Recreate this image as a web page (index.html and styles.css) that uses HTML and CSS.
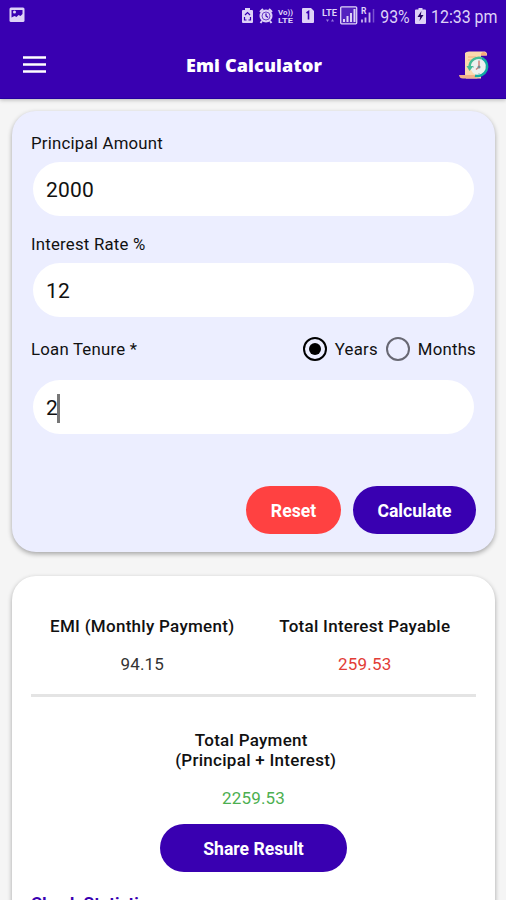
FILE: index.html
```html
<!DOCTYPE html>
<html lang="en">
<head>
<meta charset="utf-8">
<title>Emi Calculator</title>
<link rel="stylesheet" href="styles.css">
</head>
<body>
<header class="top">
  <div class="status">
    <svg class="shot" width="16" height="16" viewBox="0 0 16 16"><rect x=".5" y=".5" width="15" height="14.5" rx="1.5" fill="#ded2f7"/><path d="M2.500 3h11v4l-2 2-2-1-2 2-2-1-3 1.500z" fill="#3900b1"/><circle cx="5.500" cy="5" r="1.500" fill="#ded2f7"/></svg>
    <div class="indicators">
      <svg width="134" height="20" viewBox="241 6 134 20" fill="#ded2f7" stroke-linecap="butt">
        <path d="M245 8h5v2h2q1 0 1 1v11q0 1-1 1h-9q-1 0-1-1V11q0-1 1-1h2z"/>
        <path d="M245 15l2.500-2.500L250 15M244.500 17v3h2M250.500 17v3h-2" fill="none" stroke="#3900b1" stroke-width="1.200"/>
        <circle cx="266" cy="16" r="6.500"/><path d="M260 12l3-3M272 12l-3-3M262 21l-1.500 2M270 21l1.500 2" stroke="#ded2f7" stroke-width="2"/>
        <circle cx="266" cy="16" r="4" fill="none" stroke="#3900b1" stroke-width=".7"/><path d="M266 13.500V16l2 1.500" fill="none" stroke="#3900b1" stroke-width="1.200"/>
        <text class="mini" x="278" y="14.500" textLength="15" lengthAdjust="spacingAndGlyphs">Vo))</text><text class="mini" x="278" y="23" textLength="15" lengthAdjust="spacingAndGlyphs">LTE</text>
        <path d="M303 8h8l3 3v11q0 1-1 1h-10q-1 0-1-1V9q0-1 1-1z"/><path d="M306.500 13l2-1.500V19.500" fill="none" stroke="#3900b1" stroke-width="1.600"/>
        <text class="tiny" x="322" y="16" textLength="15" lengthAdjust="spacingAndGlyphs">LTE</text><path d="M326 19.500l1.500 2.500 1.500-2.500zM331 21.500l1.500-2.500 1.500 2.500z" fill="#9878df"/>
        <rect x="340.700" y="6.800" width="16" height="17" rx="1" fill="#5422bf" stroke="#ded2f7" stroke-width="1.300"/>
        <path d="M344 22v-3M347.500 22v-6M351 22v-9M354.500 22V9" stroke="#ded2f7" stroke-width="2"/>
        <text class="tiny" x="361" y="14">R</text>
        <path d="M362 22.500v-3M365.500 22.500v-5M369.500 22.500v-10" stroke="#c8b6ed" stroke-width="1.800"/><path d="M373.500 22.500V9" stroke="#7950cf" stroke-width="1.500"/>
      </svg>
      <span class="percent">93%</span>
      <svg class="battery" width="11" height="16" viewBox="0 0 11 16"><path d="M3.500 0h4v1.500H10q1 0 1 1V15q0 1-1 1H1q-1 0-1-1V2.500q0-1 1-1h2.500z" fill="#ded2f7"/><path d="M6.500 3L2.500 9h2.700L4.500 13l4-6H5.800z" fill="#21005f"/></svg>
      <span class="clock">12:33 pm</span>
    </div>
  </div>
  <div class="appbar">
    <svg width="24" height="18" viewBox="0 0 24 18"><path d="M0 1.500h23M0 8.500h23M0 15.500h23" stroke="#fff" stroke-width="2.700"/></svg>
    <h1>Emi Calculator</h1>
    <svg width="31" height="28" viewBox="0 0 31 28">
      <path d="M6 2q1-1.500 4-1.500h16q2.500 1 2 4H22v23H7l-1-4z" fill="#fbd9ae"/>
      <path d="M22 4.500q-.5-3.500 3-3.500 3 .5 2.500 3.500z" fill="#f5aa7b"/>
      <path d="M0 24h16q0 3 3 3.500H4Q.5 27.500 0 24z" fill="#f2b38a"/>
      <path d="M9 6h8M9 9h5" stroke="#f3bd8c" stroke-width="1.300"/>
      <circle cx="20" cy="16" r="8.500" fill="#edf1ef"/>
      <path d="M10.500 16a9.500 9.500 0 0 1 13-8.600" fill="none" stroke="#43bd98" stroke-width="2.500"/>
      <path d="M23.500 7.400A9.500 9.500 0 0 1 16 24.700" fill="none" stroke="#12aaa3" stroke-width="2.500"/>
      <path d="M7.500 15h7l-4 5z" fill="#43bd98"/>
      <path d="M20 10v6l-3 2.500" fill="none" stroke="#cf7d73" stroke-width="1.400"/><circle cx="20" cy="16" r="1.500" fill="#758b93"/>
      <path d="M20 9v1M26 16h1M20 22v1M14 16h1" stroke="#9eafae"/>
    </svg>
  </div>
</header>
<main>
  <section class="card form">
    <div class="label">Principal Amount</div>
    <div class="field">2000</div>
    <div class="label second">Interest Rate %</div>
    <div class="field">12</div>
    <div class="tenure">
      <span class="name">Loan Tenure *</span>
      <span class="radio on"></span><span>Years</span>
      <span class="radio"></span><span>Months</span>
    </div>
    <div class="field">2<i class="caret"></i></div>
    <div class="actions"><button class="btn reset">Reset</button><button class="btn calc">Calculate</button></div>
  </section>
  <section class="card result">
    <div class="totals">
      <div><h2>EMI (Monthly Payment)</h2><p>94.15</p></div>
      <div><h2>Total Interest Payable</h2><p class="red">259.53</p></div>
    </div>
    <div class="payment">
      <h2>Total Payment&nbsp;<br>&nbsp;(Principal + Interest)</h2>
      <p class="green">2259.53</p>
      <button class="btn share">Share Result</button>
    </div>
    <h3>Check Statistics</h3>
  </section>
</main>
</body>
</html>
```
FILE: styles.css
```css
* { box-sizing: border-box; }
body { margin: 0; height: 900px; overflow: hidden; background: #f5f5f5; color: #111; font: 16px/20px Roboto, "Liberation Sans", sans-serif; }
svg { display: block; flex: none; }
h1, h2, h3, p { margin: 0; }
.top { height: 99px; background: #3900b1; border-bottom: 1px solid #2500a0; box-shadow: 0 1px 4px #0004; }
.status { display: flex; justify-content: space-between; height: 32px; padding: 0 8px 0 9px; color: #ded2f7; }
.shot { margin-top: 7px; }
.indicators { display: flex; padding-top: 6px; white-space: nowrap; }
.tiny { font: bold 8.5px Roboto, sans-serif; }
.mini { font: bold 7.2px Roboto, sans-serif; }
.percent, .clock { font-size: 18px; line-height: 22px; transform-origin: left; }
.percent { width: 35px; padding-left: 6px; transform: scaleX(.88); }
.battery { margin: 2px 5px 0 5px; }
.clock { width: 67px; transform: scaleX(.885); }
.appbar { display: flex; align-items: center; justify-content: space-between; height: 66px; padding: 0 16px 0 23px; }
h1 { color: #fff; font: 800 18px/24px "Open Sans", sans-serif; letter-spacing: .15px; margin-left: 2px; white-space: nowrap; }
main { padding: 12px 11px 0 12px; }
.card { border-radius: 24px; box-shadow: 0 2px 5px #0005; }
.form { height: 441px; padding: 22px 19px 0 19px; background: #eceeff; }
.label, .tenure { font-size: 16.8px; letter-spacing: .22px; }
.label { height: 20px; }
.field { display: flex; align-items: center; height: 54px; margin: 9px 2px 0; padding: 2px 13px 0; border-radius: 27px; background: #fff; font-size: 21px; letter-spacing: .2px; }
.second { margin-top: 18px; }
.caret { width: 3px; height: 29px; margin-left: -1px; background: #777; }
.tenure { display: flex; align-items: center; height: 26px; margin-top: 19px; white-space: nowrap; }
.tenure + .field { margin-top: 18px; }
.name { margin-right: auto; }
.radio { display: flex; align-items: center; justify-content: center; width: 24px; height: 24px; border: 2px solid #686873; border-radius: 50%; margin: 0 8px; }
.radio.on { border-color: #000; }
.radio.on::after { content: ""; width: 12px; height: 12px; border-radius: 50%; background: #000; }
.actions { display: flex; justify-content: flex-end; gap: 12px; margin-top: 52px; }
.btn { height: 48px; border: 0; border-radius: 24px; padding: 2px 0 0; color: #fff; background: #3900b1; font: bold 17.6px/22px Roboto, sans-serif; }
.reset { width: 95px; background: #ff4141; }
.calc { width: 123px; }
.result { height: 360px; margin-top: 24px; padding: 40px 19px 0 19px; background: #fff; }
.totals { display: grid; grid-template-columns: 1fr 1fr; height: 81px; border-bottom: 3px solid #e4e4e4; text-align: center; white-space: nowrap; }
h2 { font: 500 17px/20px Roboto, sans-serif; letter-spacing: .28px; }
p { margin-top: 18px; font-size: 17px; letter-spacing: .2px; color: #333; }
.red { color: #e23c36; }
.green { color: #4caf50; }
.payment { display: flex; flex-direction: column; align-items: center; padding-top: 33px; text-align: center; }
.share { width: 187px; margin-top: 16px; }
h3 { margin-top: 21px; color: #3900b1; font: bold 17px/20px Roboto, sans-serif; letter-spacing: .1px; }
```
